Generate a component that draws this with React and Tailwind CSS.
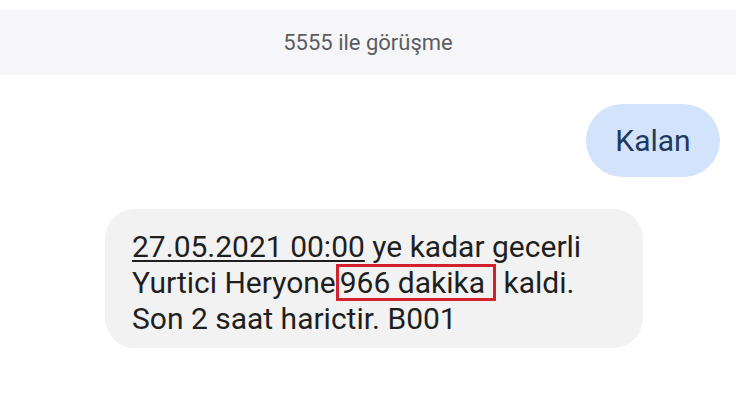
export default function App() {
  return (
    <div className="w-[736px] h-[418px] bg-white pt-[10px] overflow-hidden" style={{ fontFamily: "Roboto, 'Noto Sans', sans-serif" }}>
      <div className="h-[65px] bg-[#f6f6f8] flex items-center justify-center">
        <span className="text-[22px] text-[#5b5d62] leading-none">5555 ile görüşme</span>
      </div>
      <div className="mt-[29px] flex justify-end pr-[16px]">
        <div className="h-[73px] w-[134px] rounded-full bg-[#d3e3fc] flex items-center justify-center">
          <span className="text-[30px] text-[#1e3a5e] leading-none">Kalan</span>
        </div>
      </div>
      <div className="mt-[32px] ml-[105px] w-[538px] h-[139px] rounded-[30px] bg-[#f2f2f2] pl-[27px] pt-[20px]">
        <div className="text-[30px] leading-[35px] text-[#1f1f1f]">
          <div>
            <span className="underline decoration-[1.5px] underline-offset-[3px]">27.05.2021 00:00</span> ye kadar gecerli
          </div>
          <div>
            Yurtici Heryone<span className="inline-block leading-[31px] border-[3px] border-[#d3212d] pl-[1px] pr-[8px]">966 dakika</span> kaldi.
          </div>
          <div>Son 2 saat harictir. B001</div>
        </div>
      </div>
    </div>
  );
}
